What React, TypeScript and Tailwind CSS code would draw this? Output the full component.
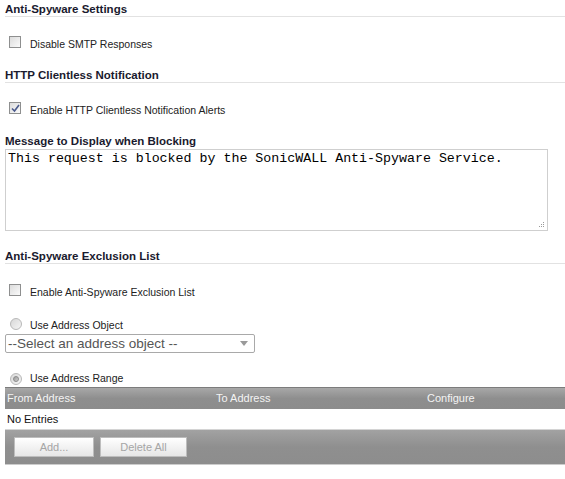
import React from 'react';

function Heading({ title, line = true, className = '' }: { title: string; line?: boolean; className?: string }) {
  return (
    <div className={`ml-[5px] h-[16px] pt-[1px] text-[11.5px] font-bold leading-[14px] text-[#1a1a2e] ${line ? 'border-b border-[#e2e2e2]' : ''} ${className}`}>
      {title}
    </div>
  );
}

function Checkbox({ checked = false }: { checked?: boolean }) {
  return (
    <div className="flex h-[12px] w-[12px] items-center justify-center border border-[#8e8f8f] bg-gradient-to-br from-[#dcdcdc] to-[#fafafa]">
      {checked && (
        <svg width="9" height="9" viewBox="0 0 9 9">
          <path d="M1 4.5 L3.5 7 L8 1" fill="none" stroke="#4a5a8c" strokeWidth="1.6" />
        </svg>
      )}
    </div>
  );
}

function Radio({ checked = false }: { checked?: boolean }) {
  return (
    <div className="flex h-[12px] w-[12px] items-center justify-center rounded-full border border-[#b8b8b8] bg-gradient-to-br from-[#d8d8d8] to-[#f6f6f6]">
      {checked && <div className="h-[6px] w-[6px] rounded-full border border-[#8a8a8a] bg-gradient-to-br from-[#9a9a9a] to-[#d0d0d0]" />}
    </div>
  );
}

function OptionRow({ label, height, control }: { label: string; height: string; control: React.ReactNode }) {
  return (
    <div className={`flex items-center pl-[9px] ${height}`}>
      {control}
      <span className="ml-[9px] mt-[4px] text-[10.5px] leading-[14px] text-[#222]">{label}</span>
    </div>
  );
}

export default function App() {
  return (
    <div className="h-[479px] w-[565px] overflow-hidden bg-white" style={{ fontFamily: '"Liberation Sans", Arial, sans-serif' }}>
      <div className="pt-[1px]" />
      <Heading title="Anti-Spyware Settings" />
      <OptionRow label="Disable SMTP Responses" height="h-[50px]" control={<Checkbox />} />
      <Heading title="HTTP Clientless Notification" />
      <OptionRow label="Enable HTTP Clientless Notification Alerts" height="h-[50px]" control={<Checkbox checked />} />
      <Heading title="Message to Display when Blocking" line={false} className="h-[15px]" />

      {/* message box */}
      <div className="relative ml-[5px] w-[543px]">
        <textarea
          readOnly
          defaultValue="This request is blocked by the SonicWALL Anti-Spyware Service."
          className="block h-[82px] w-full resize-none border border-[#cfcfcf] px-[2px] py-[1px] text-[13.3px] leading-[16px] text-black outline-none"
          style={{ fontFamily: '"Liberation Mono", "Courier New", monospace' }}
        />
        <svg className="absolute bottom-[3px] right-[3px]" width="7" height="7" viewBox="0 0 7 7">
          <rect x="5" y="1" width="1" height="1" fill="#9a9a9a" />
          <rect x="3" y="3" width="1" height="1" fill="#9a9a9a" />
          <rect x="5" y="3" width="1" height="1" fill="#9a9a9a" />
          <rect x="1" y="5" width="1" height="1" fill="#9a9a9a" />
          <rect x="3" y="5" width="1" height="1" fill="#9a9a9a" />
          <rect x="5" y="5" width="1" height="1" fill="#9a9a9a" />
        </svg>
      </div>

      <div className="h-[17px]" />
      <Heading title="Anti-Spyware Exclusion List" />
      <OptionRow label="Enable Anti-Spyware Exclusion List" height="h-[51px]" control={<Checkbox />} />

      <div className="flex h-[18px] items-center pl-[10px]">
        <Radio />
        <span className="ml-[8px] mt-[2px] text-[10.5px] leading-[14px] text-[#222]">Use Address Object</span>
      </div>
      <div className="ml-[5px] mt-[1px] flex h-[19px] w-[250px] items-center justify-between rounded-[2px] border border-[#a9a9a9] bg-white pl-[2px] pr-[6px]">
        <span className="text-[13.5px] leading-[16px] text-[#555]">--Select an address object --</span>
        <svg width="8" height="5" viewBox="0 0 8 5">
          <path d="M0 0 L8 0 L4 5 Z" fill="#9a9a9a" />
        </svg>
      </div>

      <div className="flex h-[33px] items-end pb-[1px] pl-[10px]">
        <Radio checked />
        <span className="ml-[8px] text-[10.5px] leading-[13px] text-[#222]">Use Address Range</span>
      </div>

      {/* table */}
      <div className="ml-[5px] mt-[1px] w-[560px]">
        <div className="grid h-[22px] grid-cols-[209px_211px_1fr] items-center border-t border-[#7c7c7c] bg-gradient-to-b from-[#a8a8a8] via-[#8e8e8e] to-[#8c8c8c] pl-[2px] text-[11px] text-[#f4f4f4]">
          <span>From Address</span>
          <span>To Address</span>
          <span>Configure</span>
        </div>
        <div className="flex h-[21px] items-center border-b border-[#d4d4d4] pl-[2px] text-[11px] text-[#111]">No Entries</div>
        <div className="flex h-[35px] gap-[6px] border-b border-[#cccccc] bg-gradient-to-b from-[#a2a2a2] via-[#8f8f8f] to-[#8d8d8d] pl-[9px] pt-[7px]">
          <button className="h-[20px] w-[80px] border border-[#bdbdbd] bg-gradient-to-b from-[#ffffff] to-[#e6e6e6] text-[11px] text-[#a5a5a5]">Add...</button>
          <button className="h-[20px] w-[87px] border border-[#bdbdbd] bg-gradient-to-b from-[#ffffff] to-[#e6e6e6] text-[11px] text-[#a5a5a5]">Delete All</button>
        </div>
      </div>
    </div>
  );
}
